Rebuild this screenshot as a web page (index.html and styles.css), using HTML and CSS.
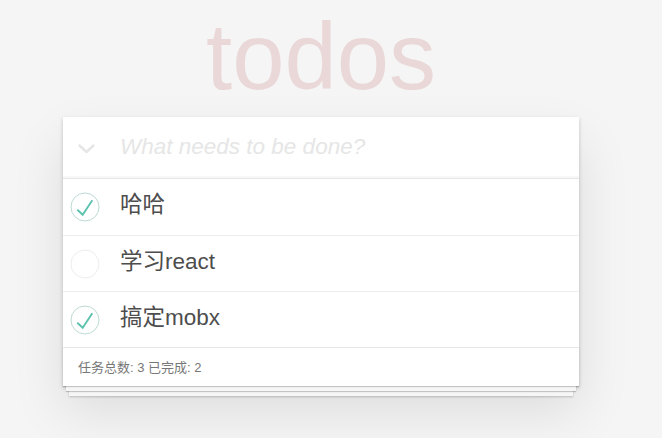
FILE: index.html
```html
<!DOCTYPE html>
<html lang="zh">
<head>
<meta charset="utf-8">
<title>todos</title>
<link rel="stylesheet" href="styles.css">
</head>
<body>
<div class="page">
  <h1 class="title">todos</h1>
  <section class="todoapp">
    <header class="entry">
      <span class="toggle-all">
        <svg width="17" height="10" viewBox="0 0 17 10"><path d="M1.5 1.5 L8.5 8 L15.5 1.5" fill="none" stroke="#e6e6e6" stroke-width="2.4" stroke-linecap="round" stroke-linejoin="round"/></svg>
      </span>
      <div class="new-todo">What needs to be done?</div>
    </header>
    <ul class="list">
      <li class="item">
        <svg class="check" width="30" height="30" viewBox="0 0 30 30"><circle cx="15" cy="15" r="14" fill="none" stroke="#bddad5" stroke-width="1"/><path d="M7.3 17.7 L12.7 22.7 L22.3 8.3" fill="none" stroke="#5dc2af" stroke-width="1.9"/></svg>
        <span class="label">哈哈</span>
      </li>
      <li class="item">
        <svg class="check" width="30" height="30" viewBox="0 0 30 30"><circle cx="15" cy="15" r="14" fill="none" stroke="#ededed" stroke-width="1"/></svg>
        <span class="label">学习react</span>
      </li>
      <li class="item">
        <svg class="check" width="30" height="30" viewBox="0 0 30 30"><circle cx="15" cy="15" r="14" fill="none" stroke="#bddad5" stroke-width="1"/><path d="M7.3 17.7 L12.7 22.7 L22.3 8.3" fill="none" stroke="#5dc2af" stroke-width="1.9"/></svg>
        <span class="label">搞定mobx</span>
      </li>
    </ul>
    <footer class="footer">任务总数: 3 已完成: 2</footer>
  </section>
</div>
</body>
</html>
```

FILE: styles.css
```css
html, body {
  margin: 0;
  padding: 0;
}
body {
  background: #f5f5f5;
  min-height: 438px;
  font-family: "Helvetica Neue", Helvetica, "Liberation Sans", Arial, "Noto Sans CJK SC", sans-serif;
  color: #4d4d4d;
}
.page {
  width: 642px;
  padding-bottom: 40px;
}
.title {
  margin: 0;
  height: 117px;
  line-height: 113px;
  text-align: center;
  font-size: 94px;
  font-weight: 100;
  color: rgba(175, 47, 47, 0.15);
}
.todoapp {
  width: 516px;
  margin: 0 auto;
  background: #fff;
  box-shadow: 0 2px 4px rgba(0, 0, 0, 0.2), 0 25px 50px rgba(0, 0, 0, 0.1);
}
.entry {
  height: 61px;
  display: flex;
  align-items: center;
  box-shadow: inset 0 -2px 1px rgba(0, 0, 0, 0.03);
}
.toggle-all {
  width: 57px;
  display: flex;
  padding-left: 15px;
  box-sizing: border-box;
  padding-top: 2px;
}
.new-todo {
  font-size: 22.5px;
  font-style: italic;
  color: #e6e6e6;
  padding-bottom: 1px;
}
.list {
  list-style: none;
  margin: 0;
  padding: 0;
  border-top: 1px solid #e6e6e6;
}
.item {
  height: 55px;
  display: flex;
  align-items: center;
  border-bottom: 1px solid #ededed;
}
.item:first-child {
  height: 56px;
}
.item:last-child {
  border-bottom: none;
}
.check {
  margin-left: 7px;
  flex: none;
}
.label {
  margin-left: 20px;
  font-size: 22.5px;
  line-height: 1.2;
  padding-bottom: 5px;
  color: #4d4d4d;
}
.footer {
  height: 37px;
  border-top: 1px solid #e6e6e6;
  padding: 0 15px 1px;
  display: flex;
  align-items: center;
  font-size: 13px;
  color: #777;
  box-shadow: 0 1px 1px rgba(0, 0, 0, 0.2), 0 8px 0 -3px #f6f6f6, 0 9px 1px -3px rgba(0, 0, 0, 0.2), 0 16px 0 -6px #f6f6f6, 0 17px 2px -6px rgba(0, 0, 0, 0.2);
}
```
